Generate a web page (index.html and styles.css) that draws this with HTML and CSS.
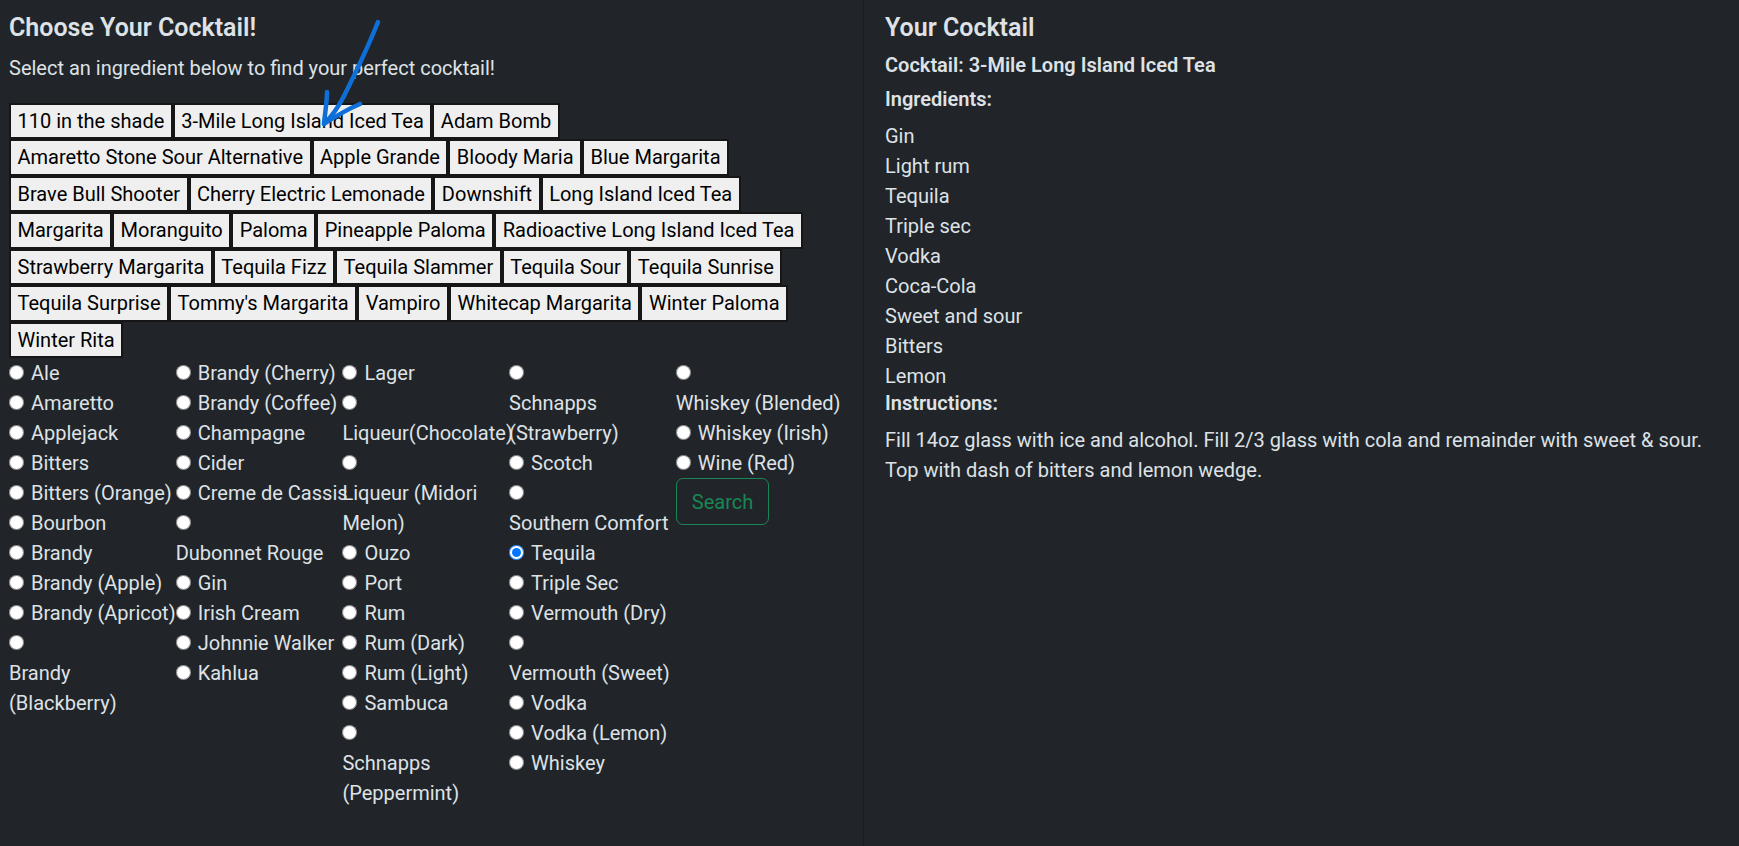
FILE: index.html
```html
<!DOCTYPE html>
<html lang="en">
<head>
<meta charset="utf-8">
<title>Cocktail Finder</title>
<link rel="stylesheet" href="styles.css">
</head>
<body>
<div class="page">
  <section class="pane pane-left">
    <h5 class="title">Choose Your Cocktail!</h5>
    <p class="lead">Select an ingredient below to find your perfect cocktail!</p>
    <div class="drinks">
      <button>110 in the shade</button><button>3-Mile Long Island Iced Tea</button><button>Adam Bomb</button><button>Amaretto Stone Sour Alternative</button><button>Apple Grande</button><button>Bloody Maria</button><button>Blue Margarita</button><button>Brave Bull Shooter</button><button>Cherry Electric Lemonade</button><button>Downshift</button><button>Long Island Iced Tea</button><button>Margarita</button><button>Moranguito</button><button>Paloma</button><button>Pineapple Paloma</button><button>Radioactive Long Island Iced Tea</button><button>Strawberry Margarita</button><button>Tequila Fizz</button><button>Tequila Slammer</button><button>Tequila Sour</button><button>Tequila Sunrise</button><button>Tequila Surprise</button><button>Tommy's Margarita</button><button>Vampiro</button><button>Whitecap Margarita</button><button>Winter Paloma</button><button>Winter Rita</button>
    </div>
    <form class="ings">
      <div class="ing-col">
        <div class="ing"><input type="radio" name="ing"><label>Ale</label></div>
        <div class="ing"><input type="radio" name="ing"><label>Amaretto</label></div>
        <div class="ing"><input type="radio" name="ing"><label>Applejack</label></div>
        <div class="ing"><input type="radio" name="ing"><label>Bitters</label></div>
        <div class="ing"><input type="radio" name="ing"><label>Bitters (Orange)</label></div>
        <div class="ing"><input type="radio" name="ing"><label>Bourbon</label></div>
        <div class="ing"><input type="radio" name="ing"><label>Brandy</label></div>
        <div class="ing"><input type="radio" name="ing"><label>Brandy (Apple)</label></div>
        <div class="ing"><input type="radio" name="ing"><label>Brandy (Apricot)</label></div>
        <div class="ing stack wrap"><input type="radio" name="ing"><label>Brandy (Blackberry)</label></div>
      </div>
      <div class="ing-col">
        <div class="ing"><input type="radio" name="ing"><label>Brandy (Cherry)</label></div>
        <div class="ing"><input type="radio" name="ing"><label>Brandy (Coffee)</label></div>
        <div class="ing"><input type="radio" name="ing"><label>Champagne</label></div>
        <div class="ing"><input type="radio" name="ing"><label>Cider</label></div>
        <div class="ing"><input type="radio" name="ing"><label>Creme de Cassis</label></div>
        <div class="ing stack"><input type="radio" name="ing"><label>Dubonnet Rouge</label></div>
        <div class="ing"><input type="radio" name="ing"><label>Gin</label></div>
        <div class="ing"><input type="radio" name="ing"><label>Irish Cream</label></div>
        <div class="ing"><input type="radio" name="ing"><label>Johnnie Walker</label></div>
        <div class="ing"><input type="radio" name="ing"><label>Kahlua</label></div>
      </div>
      <div class="ing-col">
        <div class="ing"><input type="radio" name="ing"><label>Lager</label></div>
        <div class="ing stack"><input type="radio" name="ing"><label>Liqueur(Chocolate)</label></div>
        <div class="ing stack wrap"><input type="radio" name="ing"><label>Liqueur (Midori Melon)</label></div>
        <div class="ing"><input type="radio" name="ing"><label>Ouzo</label></div>
        <div class="ing"><input type="radio" name="ing"><label>Port</label></div>
        <div class="ing"><input type="radio" name="ing"><label>Rum</label></div>
        <div class="ing"><input type="radio" name="ing"><label>Rum (Dark)</label></div>
        <div class="ing"><input type="radio" name="ing"><label>Rum (Light)</label></div>
        <div class="ing"><input type="radio" name="ing"><label>Sambuca</label></div>
        <div class="ing stack wrap"><input type="radio" name="ing"><label>Schnapps (Peppermint)</label></div>
      </div>
      <div class="ing-col">
        <div class="ing stack wrap"><input type="radio" name="ing"><label>Schnapps (Strawberry)</label></div>
        <div class="ing"><input type="radio" name="ing"><label>Scotch</label></div>
        <div class="ing stack"><input type="radio" name="ing"><label>Southern Comfort</label></div>
        <div class="ing"><input type="radio" name="ing" checked><label>Tequila</label></div>
        <div class="ing"><input type="radio" name="ing"><label>Triple Sec</label></div>
        <div class="ing"><input type="radio" name="ing"><label>Vermouth (Dry)</label></div>
        <div class="ing stack"><input type="radio" name="ing"><label>Vermouth (Sweet)</label></div>
        <div class="ing"><input type="radio" name="ing"><label>Vodka</label></div>
        <div class="ing"><input type="radio" name="ing"><label>Vodka (Lemon)</label></div>
        <div class="ing"><input type="radio" name="ing"><label>Whiskey</label></div>
      </div>
      <div class="ing-col">
        <div class="ing stack"><input type="radio" name="ing"><label>Whiskey (Blended)</label></div>
        <div class="ing"><input type="radio" name="ing"><label>Whiskey (Irish)</label></div>
        <div class="ing"><input type="radio" name="ing"><label>Wine (Red)</label></div>
        <button type="button" class="btn-search">Search</button>
      </div>
    </form>
  </section>
  <section class="pane pane-right">
    <h5 class="title">Your Cocktail</h5>
    <h6 class="sub">Cocktail: 3-Mile Long Island Iced Tea</h6>
    <h6 class="sub">Ingredients:</h6>
    <ul class="ingredients">
      <li>Gin</li>
      <li>Light rum</li>
      <li>Tequila</li>
      <li>Triple sec</li>
      <li>Vodka</li>
      <li>Coca-Cola</li>
      <li>Sweet and sour</li>
      <li>Bitters</li>
      <li>Lemon</li>
    </ul>
    <h6 class="sub">Instructions:</h6>
    <p class="instructions">Fill 14oz glass with ice and alcohol. Fill 2/3 glass with cola and remainder with sweet &amp; sour. Top with dash of bitters and lemon wedge.</p>
  </section>
</div>
<svg class="annotation" width="130" height="140" viewBox="0 0 130 140" aria-hidden="true">
  <path d="M108 10 C100 30 86 60 74 84 C68 96 60 106 54 112" fill="none" stroke="#0f6fd8" stroke-width="4.5" stroke-linecap="round"/>
  <path d="M57 80 C57 90 55 101 54 112 C66 104 78 97 90 92" fill="none" stroke="#0f6fd8" stroke-width="4.5" stroke-linecap="round" stroke-linejoin="round"/>
</svg>
</body>
</html>
```
FILE: styles.css
```css
* { box-sizing: border-box; }

html, body {
  margin: 0;
  padding: 0;
}

body {
  background: #212529;
  color: #dee2e6;
  font-family: Roboto, "Liberation Sans", Arial, sans-serif;
  font-size: 20px;
  line-height: 1.5;
}

.page {
  display: flex;
  min-height: 100vh;
}

.pane {
  padding-top: 12.7px;
}

.pane-left {
  flex: 0 0 864px;
  padding-left: 9px;
  padding-right: 20.5px;
  border-right: 1px solid #1a1d20;
}

.pane-right {
  flex: 1 1 auto;
  padding-left: 21px;
  padding-right: 21px;
}

.title {
  margin: 0 0 10px;
  font-size: 25px;
  font-weight: 600;
  line-height: 1.2;
}

.sub {
  margin: 0 0 10px;
  font-size: 20px;
  font-weight: 600;
  line-height: 1.2;
}

.lead {
  margin: 0 0 20px;
}

.drinks {
  display: flex;
  flex-wrap: wrap;
}

.drinks button {
  font: inherit;
  line-height: 30px;
  color: #000;
  background: #efefef;
  border: 2px solid #161616;
  border-radius: 0;
  padding: 1.25px 6.5px;
  margin: 0;
}

.ings {
  display: grid;
  grid-template-columns: repeat(5, minmax(0, 1fr));
  margin: 0;
}

.ing {
  white-space: nowrap;
}

.ing input {
  width: 15px;
  height: 15px;
  margin: 0 7px 0 0;
  vertical-align: baseline;
}

.ing.stack label {
  display: block;
}

.ing.wrap label {
  white-space: normal;
}

.ingredients {
  list-style: none;
  margin: 0;
  padding: 0;
}

.instructions {
  margin: 0;
}

.btn-search {
  font: inherit;
  line-height: 30px;
  color: #198754;
  background: transparent;
  border: 1px solid #198754;
  border-radius: 7px;
  padding: 7.5px 15px;
  margin: 0;
}

.annotation {
  position: absolute;
  left: 270px;
  top: 12px;
  pointer-events: none;
}
```
